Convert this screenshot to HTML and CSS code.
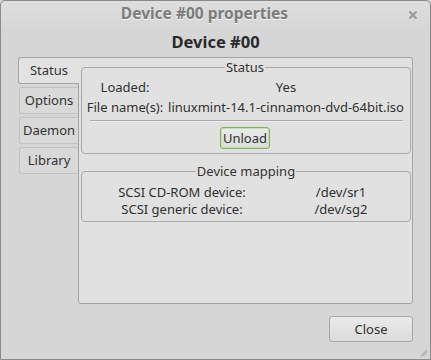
FILE: index.html
```html
<!DOCTYPE html>
<html lang="en">
<head>
<meta charset="UTF-8">
<title>Device #00 properties</title>
<link rel="stylesheet" href="styles.css">
</head>
<body>
<div class="window">
    <div class="titlebar">
        <span></span>
        <span class="title">Device #00 properties</span>
        <span class="close">
            <svg width="10" height="10" viewBox="0 0 10 10"><path d="M1.5 1.5 L8.5 8.5 M8.5 1.5 L1.5 8.5" stroke="#9c9c9c" stroke-width="2.2" fill="none"/></svg>
        </span>
    </div>
    <div class="heading">Device #00</div>
    <div class="notebook">
        <ul class="tabs">
            <li class="on">Status</li>
            <li>Options</li>
            <li>Daemon</li>
            <li>Library</li>
        </ul>
        <div class="page">
            <fieldset class="frame status">
                <legend>Status</legend>
                <div class="grid grid-status">
                    <span>Loaded:</span><span>Yes</span>
                    <span>File name(s):</span><span>linuxmint-14.1-cinnamon-dvd-64bit.iso</span>
                </div>
                <div class="sep"></div>
                <div class="btnrow"><button class="btn btn-unload">Unload</button></div>
            </fieldset>
            <fieldset class="frame mapping">
                <legend>Device mapping</legend>
                <div class="grid grid-map">
                    <span>SCSI CD-ROM device:</span><span>/dev/sr1</span>
                    <span>SCSI generic device:</span><span>/dev/sg2</span>
                </div>
            </fieldset>
        </div>
    </div>
    <div class="footer">
        <button class="btn btn-close">Close</button>
    </div>
    <svg class="grip" width="9" height="9" viewBox="0 0 9 9"><path d="M8 1 L8 8 L1 8 Z" fill="#b4b4b4"/><path d="M8 4 L8 8 L4 8 Z" fill="#c8c8c8"/></svg>
</div>
</body>
</html>
```

FILE: styles.css
```css
*{margin:0;padding:0;box-sizing:border-box;list-style:none;}
html,body{width:431px;height:360px;overflow:hidden;background:#d6d6d6;}
body{font-family:"Noto Sans","Open Sans",sans-serif;font-size:13px;color:#303030;}

.window{position:relative;width:431px;height:360px;border:1px solid #8a8a8a;border-radius:5px 5px 0 0;background:linear-gradient(#dedede,#d6d6d6 30px);display:flex;flex-direction:column;}

.titlebar{height:25px;display:grid;grid-template-columns:1fr auto 1fr;align-items:center;}
.title{font-weight:bold;font-size:15.5px;color:#7c7c7c;text-shadow:0 1px 0 #f4f4f4;line-height:25px;margin-right:22px;}
.close{justify-self:end;margin-right:12px;display:flex;margin-top:2px;}

.heading{margin-top:6px;margin-bottom:5px;line-height:20px;text-align:center;font-weight:bold;font-size:16.5px;color:#2a2a2a;}

.notebook{display:flex;padding:0 17px;height:247px;}
.tabs{width:60px;display:flex;flex-direction:column;align-items:flex-end;gap:3px;}
.tabs li{width:59px;height:27px;line-height:25px;text-align:center;background:#d9d9d9;border:1px solid #c2c2c2;border-right:none;border-radius:3px 0 0 3px;color:#333;}
.tabs li.on{width:61px;margin-right:-1px;position:relative;z-index:1;background:#e2e2e2;border-color:#a6a6a6;}
.page{flex:1;background:#e1e1e1;border:1px solid #a4a4a4;border-radius:0 3px 3px 3px;padding:0 1px 0 2px;}

.frame{border:1px solid #aaaaaa;border-radius:4px;padding:0;min-width:0;}
.frame legend{margin:0 auto;padding:0 1px;line-height:16px;color:#333;}
.status{margin-top:1px;padding:2px 5px 4px 3px;}
.mapping{margin-top:9px;padding:5px 0 3px;}

.grid{display:grid;line-height:20px;}
.grid span{text-align:center;white-space:nowrap;}
.grid-status{grid-template-columns:80px 236px;column-gap:3px;}
.grid-map{grid-template-columns:152px 122px;column-gap:22px;padding-left:24px;line-height:17px;}

.sep{margin:3px 2px 0 5px;height:2px;border-top:1px solid #a9a9a9;border-bottom:1px solid #f0f0f0;}
.btnrow{display:flex;justify-content:center;margin-top:5px;}

.btn{font-family:inherit;font-size:13px;color:#303030;background:linear-gradient(#eaeaea,#dcdcdc);border:1px solid #a8a8a8;border-radius:3px;}
.btn-unload{width:50px;height:22px;border-color:#86b25d;box-shadow:inset 0 0 0 1px #c6dcb0;}
.footer{display:flex;justify-content:flex-end;padding:12px 17px 0;}
.btn-close{width:84px;height:26px;}

.grip{position:absolute;right:2px;bottom:2px;}
```
